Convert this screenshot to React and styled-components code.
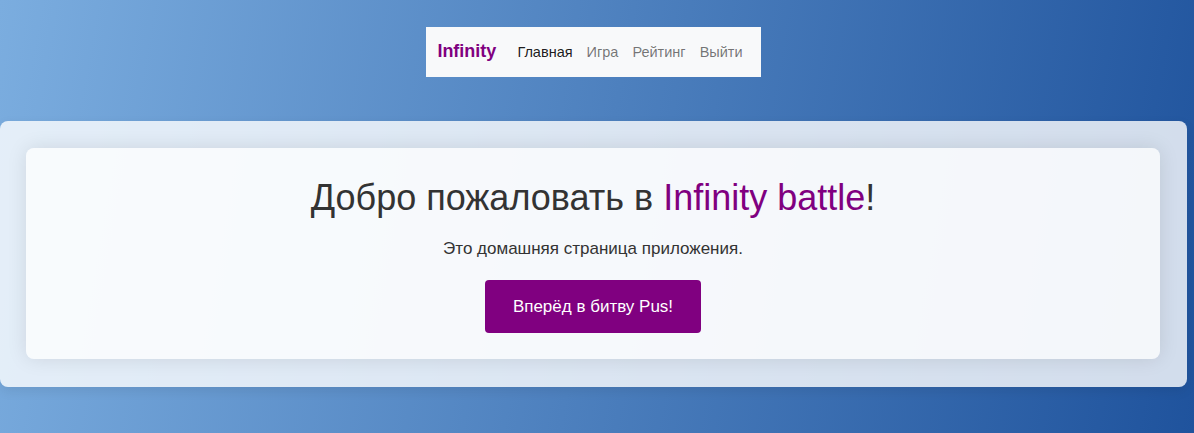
import * as React from "react";
import styled, { createGlobalStyle } from "styled-components";

const GlobalStyle = createGlobalStyle`
  html, body {
    margin: 0;
    padding: 0;
  }
  body {
    font-family: "Liberation Sans", Arial, sans-serif;
    background: linear-gradient(100deg, #7baddf 0%, #1f539d 100%);
    min-height: 433px;
  }
`;

const Page = styled.div`
  width: 1187px;
  min-height: 433px;
  padding-top: 27px;
  box-sizing: border-box;
`;

const NavWrap = styled.div`
  display: flex;
  justify-content: center;
  margin-bottom: 44px;
`;

const Navbar = styled.nav`
  display: flex;
  align-items: center;
  height: 50px;
  padding: 0 18px 0 11px;
  background-color: #f8f9fa;
`;

const Brand = styled.a`
  font-weight: 700;
  font-size: 18px;
  color: #800080;
  text-decoration: none;
  margin-right: 21px;
  margin-top: -1px;
`;

const NavList = styled.div`
  display: flex;
  gap: 14px;
`;

const NavLink = styled.a`
  font-size: 14.5px;
  color: ${(p) => (p.$active ? "rgba(0, 0, 0, 0.9)" : "rgba(0, 0, 0, 0.55)")};
  text-decoration: none;
  cursor: pointer;
`;

const Outer = styled.section`
  box-sizing: border-box;
  padding: 27px 27px 28px 26px;
  background: rgba(255, 255, 255, 0.8);
  border-radius: 8px;
  box-shadow: 0 4px 12px rgba(0, 0, 0, 0.08);
`;

const Card = styled.div`
  display: flex;
  flex-direction: column;
  align-items: center;
  padding: 28px 20px 26px;
  background: rgba(255, 255, 255, 0.75);
  border-radius: 8px;
  box-shadow: 0 0 20px rgba(0, 0, 0, 0.1);
`;

const Title = styled.h1`
  margin: 0;
  font-size: 36px;
  font-weight: 400;
  line-height: 43px;
  color: #333;
`;

const Accent = styled.span`
  color: #800080;
`;

const Lead = styled.p`
  margin: 20px 0 0;
  font-size: 17px;
  line-height: 19px;
  color: #333;
`;

const CTA = styled.button`
  margin-top: 22px;
  padding: 15px 28px;
  font-family: inherit;
  font-size: 17px;
  line-height: 23px;
  color: #fff;
  background-color: #800080;
  border: none;
  border-radius: 4px;
  cursor: pointer;
`;

export default function App() {
  return (
    <>
      <GlobalStyle />
      <Page>
        <NavWrap>
          <Navbar>
            <Brand href="#">Infinity</Brand>
            <NavList>
              <NavLink $active>Главная</NavLink>
              <NavLink>Игра</NavLink>
              <NavLink>Рейтинг</NavLink>
              <NavLink>Выйти</NavLink>
            </NavList>
          </Navbar>
        </NavWrap>
        <Outer>
          <Card>
            <Title>
              Добро пожаловать в <Accent>Infinity battle</Accent>!
            </Title>
            <Lead>Это домашняя страница приложения.</Lead>
            <CTA>Вперёд в битву Pus!</CTA>
          </Card>
        </Outer>
      </Page>
    </>
  );
}
